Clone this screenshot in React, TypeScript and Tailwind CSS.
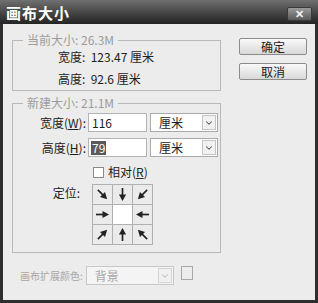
import { ChevronDown } from 'lucide-react';

const font = { fontFamily: '"Noto Sans CJK SC", "Noto Sans", sans-serif' };

function Arrow({ className }: { className: string }) {
  return (
    <svg viewBox="0 0 16 16" className={`h-[15px] w-[15px] ${className}`}>
      <line x1="1" y1="8" x2="10" y2="8" stroke="#222" strokeWidth="1.8" />
      <polygon points="8,4.2 15,8 8,11.8" fill="#222" />
    </svg>
  );
}

function Select({ value, width, disabled }: { value: string; width: string; disabled?: boolean }) {
  return (
    <div
      className={`flex h-[19px] items-center justify-between border ${width} ${
        disabled ? 'border-[#c8c8c8] bg-[#f4f4f4] text-[#a8a8a8]' : 'border-[#a9a9a9] bg-white text-[#222]'
      }`}
    >
      <span className="pl-[8px] leading-none">{value}</span>
      <span
        className={`mr-[1px] flex h-[15px] w-[14px] items-center justify-center border ${
          disabled ? 'border-[#d4d4d4] bg-[#f0f0f0] text-[#c0c0c0]' : 'border-[#c4c4c4] bg-[#f2f2f2] text-[#555]'
        }`}
      >
        <ChevronDown size={10} strokeWidth={2.5} />
      </span>
    </div>
  );
}

export default function App() {
  return (
    <div className="flex h-[303px] w-[318px] flex-col bg-[#2e2e2e] text-[12px] text-[#222]" style={font}>
      {/* titlebar */}
      <div className="flex h-[24px] shrink-0 items-center justify-between bg-gradient-to-b from-[#707070] to-[#242424] pl-[6px] pr-[6px]">
        <span className="text-[15px] font-bold leading-none tracking-[1px] text-white">画布大小</span>
        <span className="mt-[3px] flex h-[14px] w-[25px] items-center justify-center rounded-[2px] border border-[#3a3a3a] bg-gradient-to-b from-[#9a9a9a] to-[#5a5a5a] text-[11px] font-bold leading-none text-[#f0f0f0]">
          ✕
        </span>
      </div>

      {/* body */}
      <div className="mb-[3px] ml-[3px] mr-[3px] flex flex-1 flex-col bg-[#ececec]">
        <div className="flex">
          <div className="ml-[9px] w-[209px]">
            <fieldset className="mt-[9px] h-[58px] border border-[#b9b9b9] px-0">
              <legend className="ml-[10px] px-[4px] leading-[14px] text-[#9c9c9c]">当前大小: 26.3M</legend>
              <div className="ml-[45px] mt-[2px] flex flex-col gap-[6px] leading-[16px]">
                <span>宽度:&nbsp; 123.47 厘米</span>
                <span>高度:&nbsp; 92.6 厘米</span>
              </div>
            </fieldset>

            <fieldset className="mt-[5px] h-[157px] border border-[#b9b9b9] px-0">
              <legend className="ml-[10px] px-[4px] leading-[14px] text-[#9c9c9c]">新建大小: 21.1M</legend>
              <div className="mt-[3px] flex items-center">
                <span className="w-[73px] text-right">
                  宽度(<span className="underline">W</span>):
                </span>
                <div className="ml-[2px] flex h-[19px] w-[59px] items-center border border-[#b4b4b4] bg-white pl-[3px] leading-none">
                  116
                </div>
                <div className="ml-[3px]">
                  <Select value="厘米" width="w-[68px]" />
                </div>
              </div>
              <div className="mt-[6px] flex items-center">
                <span className="w-[73px] text-right">
                  高度(<span className="underline">H</span>):
                </span>
                <div className="ml-[2px] flex h-[19px] w-[59px] items-center border border-[#b4b4b4] bg-white pl-[2px] leading-none">
                  <span className="bg-[#5a5a5a] px-[1px] py-[1px] text-white">79</span>
                </div>
                <div className="ml-[3px]">
                  <Select value="厘米" width="w-[68px]" />
                </div>
              </div>
              <div className="ml-[80px] mt-[8px] flex items-center gap-[4px] leading-[14px]">
                <span className="h-[11px] w-[11px] border border-[#8a8a8a] bg-white" />
                <span>
                  相对(<span className="underline">R</span>)
                </span>
              </div>
              <div className="mt-[5px] flex">
                <span className="w-[67px] pt-[2px] text-right leading-[14px]">定位:</span>
                <div className="ml-[12px] grid grid-cols-3 border-l border-t border-[#b0b0b0]">
                  {[
                    'rotate-45',
                    'rotate-90',
                    'rotate-135',
                    'rotate-0',
                    '',
                    'rotate-180',
                    '-rotate-45',
                    '-rotate-90',
                    '-rotate-135',
                  ].map((r, i) => (
                    <div
                      key={i}
                      className={`flex h-[20px] w-[20px] items-center justify-center border-b border-r border-[#b0b0b0] ${
                        r ? 'bg-[#ebebeb]' : 'bg-white'
                      }`}
                    >
                      {r && <Arrow className={r} />}
                    </div>
                  ))}
                </div>
              </div>
            </fieldset>
          </div>

          <div className="ml-[18px] mt-[14px] flex flex-col gap-[8px]">
            <div className="flex h-[17px] w-[68px] items-center justify-center rounded-[2px] border border-[#8c8c8c] bg-gradient-to-b from-[#fafafa] to-[#d8d8d8] leading-none">
              确定
            </div>
            <div className="flex h-[17px] w-[68px] items-center justify-center rounded-[2px] border border-[#8c8c8c] bg-gradient-to-b from-[#fafafa] to-[#d8d8d8] leading-none">
              取消
            </div>
          </div>
        </div>

        <div className="ml-[17px] mt-[13px] flex items-start">
          <span className="mr-[3px] mt-[3px] whitespace-nowrap text-[10px] leading-[13px] text-[#a8a8a8]">
            画布扩展颜色:
          </span>
          <Select value="背景" width="w-[88px]" disabled />
          <span className="ml-[7px] h-[14px] w-[12px] border border-[#a8a8a8] bg-[#ececec]" />
        </div>
      </div>
    </div>
  );
}
